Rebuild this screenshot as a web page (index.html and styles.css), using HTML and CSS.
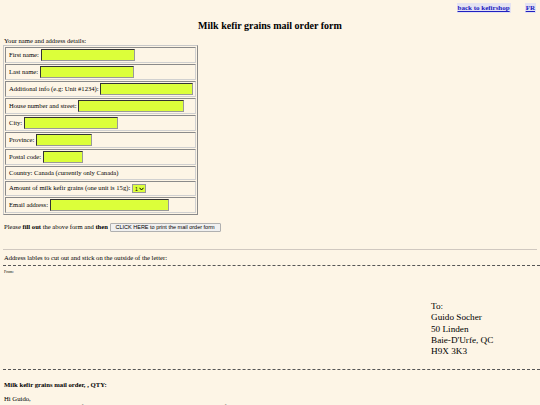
FILE: index.html
```html
<!DOCTYPE html>
<html>
<head>
<meta charset="utf-8">
<link rel="stylesheet" href="styles.css">
</head>
<body>
<div class="topbar">
  <a class="toplink" href="#">back to kefirshop</a>
  <a class="toplink" href="#">FR</a>
</div>
<h1 class="title">Milk kefir grains mail order form</h1>
<div class="intro">Your name and address details:</div>
<table class="form">
  <tr><td>First name: <input class="in w94" type="text"></td></tr>
  <tr><td>Last name: <input class="in w94" type="text"></td></tr>
  <tr><td>Additional info (e.g: Unit #1234): <input class="in w93" type="text"></td></tr>
  <tr><td>House number and street: <input class="in w106" type="text"></td></tr>
  <tr><td>City: <input class="in w94" type="text"></td></tr>
  <tr><td>Province: <input class="in w56" type="text"></td></tr>
  <tr><td>Postal code: <input class="in w40" type="text"></td></tr>
  <tr><td class="txt">Country: Canada (currently only Canada)</td></tr>
  <tr><td class="txt">Amount of milk kefir grains (one unit is 15g): <span class="sel">1 <svg width="5" height="4" viewBox="0 0 5 4"><path d="M0.5 0.8 L2.5 3 L4.5 0.8" fill="none" stroke="#000" stroke-width="1"/></svg></span></td></tr>
  <tr><td>Email address: <input class="in w119" type="text"></td></tr>
</table>
<div class="please">Please <b>fill out</b> the above form and <b>then</b> <button class="btn">CLICK HERE to print the mail order form</button></div>
<hr class="rule">
<div class="labels">Address lables to cut out and stick on the outside of the letter:</div>
<div class="dash"></div>
<div class="from">From:</div>
<div class="to">
  To:<br>Guido Socher<br>50 Linden<br>Baie-D'Urfe, QC<br>H9X 3K3
</div>
<div class="dash dash2"></div>
<div class="order">Milk kefir grains mail order, , QTY:</div>
<div class="letter">Hi Guido,<br>I would like to order milk kefir grains. I have enclosed cash with this letter to pay for it.</div>
</body>
</html>
```
FILE: styles.css
```css
html, body {
  margin: 0;
  background: #fdf5e6;
}
body {
  padding: 0 3px;
  font-family: "Liberation Serif", "Times New Roman", serif;
  font-size: 6.6px;
  color: #000;
}
.topbar {
  display: flex;
  justify-content: flex-end;
  gap: 14px;
  padding: 3px 1px 0 0;
  height: 12px;
}
.toplink {
  font-weight: bold;
  font-size: 7px;
  color: #2020c0;
  background: #e4e2f2;
  padding: 1px 1px;
  line-height: 8px;
  height: 8px;
}
.title {
  margin: 5px 0 0 0;
  text-align: center;
  font-size: 10px;
  line-height: 12px;
}
.intro {
  margin-top: 5px;
  padding-left: 1px;
  line-height: 8px;
}
.form {
  border: 1px solid #9a9a9a;
  border-color: #c8c8c8 #8a8a8a #8a8a8a #c8c8c8;
  border-spacing: 1px;
  width: 195px;
  margin-top: 0;
}
.form td {
  border: 1px solid #a8a8a8;
  border-color: #8a8a8a #d0d0d0 #d0d0d0 #8a8a8a;
  padding: 1px 2px 1px 3px;
  white-space: nowrap;
  line-height: 8px;
}
.form td.txt {
  padding: 2px 2px 2px 3px;
}
.in {
  box-sizing: border-box;
  height: 12px;
  background: #dcff3a;
  border: 1px solid #555;
  border-color: #333 #999 #999 #333;
  padding: 0;
  margin: 0;
  vertical-align: middle;
}
.w94 { width: 94px; }
.w93 { width: 93px; }
.w106 { width: 106px; }
.w56 { width: 56px; }
.w40 { width: 40px; }
.w119 { width: 119px; }
.sel {
  display: inline-flex;
  align-items: center;
  gap: 1px;
  background: #dcff3a;
  font-family: "Liberation Sans", sans-serif;
  font-size: 5px;
  height: 7px;
  padding: 0 1px 0 2px;
  border: 1px solid #999;
  vertical-align: middle;
}
.please {
  margin-top: 7px;
  line-height: 10px;
  padding-left: 1px;
}
.btn {
  font-family: "Liberation Sans", sans-serif;
  font-size: 5.5px;
  height: 9px;
  padding: 0 5px;
  background: #f0f0f0;
  border: 1px solid #b0b0b0;
  border-radius: 1px;
  vertical-align: middle;
  line-height: 7px;
}
.rule {
  margin: 17px 0 0 0;
  border: none;
  border-top: 1px solid #d0c8c0;
  height: 0;
}
.labels {
  margin-top: 4px;
  line-height: 8px;
  padding-left: 1px;
}
.dash {
  margin-top: 3px;
  border-top: 1px dashed #555;
  margin-right: -3px;
}
.from {
  font-size: 4px;
  line-height: 5px;
  margin-top: 3px;
  padding-left: 1px;
}
.to {
  margin: 27px 0 0 428px;
  font-size: 9.2px;
  line-height: 11.3px;
}
.dash2 {
  margin-top: 12px;
}
.order {
  margin-top: 11px;
  font-weight: bold;
  font-size: 6.7px;
  line-height: 8px;
  padding-left: 1px;
}
.letter {
  margin-top: 6px;
  font-size: 6.7px;
  line-height: 8px;
  padding-left: 1px;
}
```
